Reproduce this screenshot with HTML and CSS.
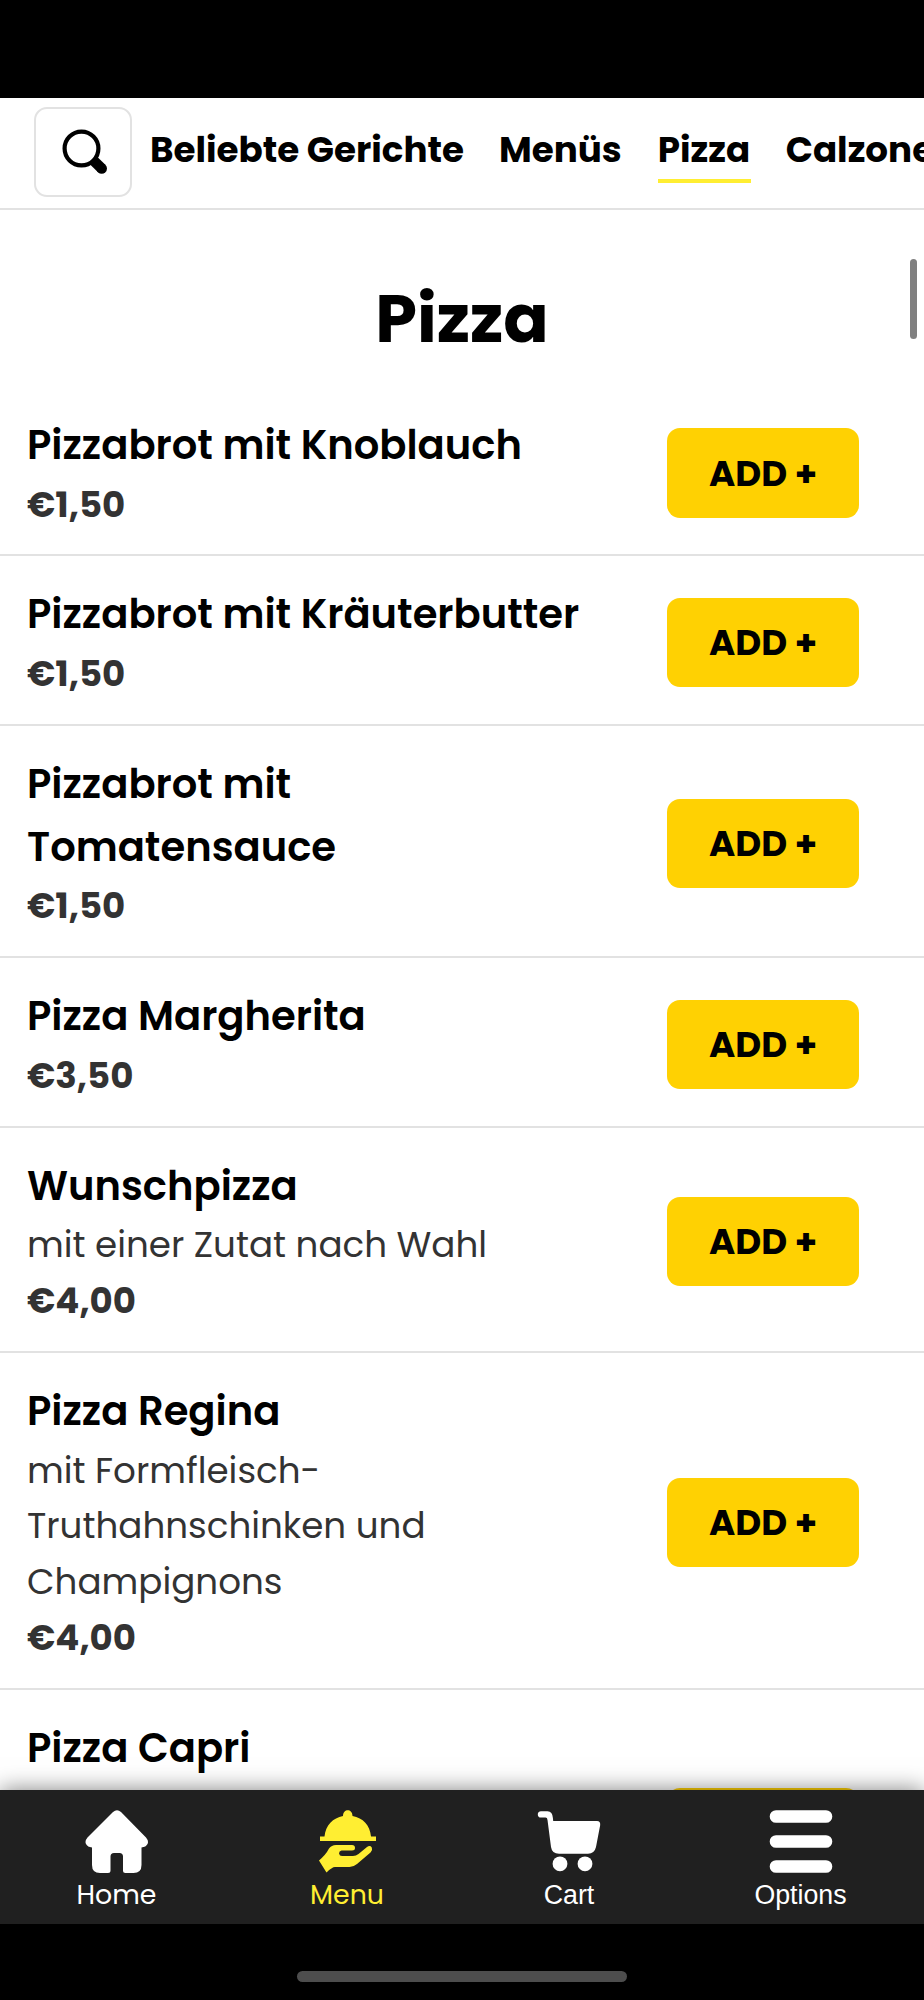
FILE: index.html
```html
<!DOCTYPE html>
<html lang="de">
<head>
<meta charset="utf-8">
<title>Pizza</title>
<link rel="stylesheet" href="styles.css">
</head>
<body>
<div class="screen">
  <div class="status"></div>
  <header class="tabs">
    <button class="search" aria-label="Suche">
      <svg width="46" height="46" viewBox="0 0 46 46"><circle cx="19.500" cy="19.500" r="16.900" fill="none" stroke="#000" stroke-width="4.200"/><path d="M31.500 31.500L39.700 39.500" stroke="#000" stroke-width="10.500"/><circle cx="39.700" cy="39.500" r="5.250"/></svg>
    </button>
    <nav class="tab-list">
      <a class="tab tab-popular">Beliebte Gerichte</a>
      <a class="tab tab-menus">Menüs</a>
      <a class="tab tab-active">Pizza</a>
      <a class="tab tab-calzone">Calzone</a>
    </nav>
  </header>
  <main class="content">
    <h1 class="heading">Pizza</h1>
    <section class="item"><div class="info"><h2 class="name">Pizzabrot mit Knoblauch</h2><p class="price">€1,50</p></div><button class="add">ADD +</button></section>
    <section class="item"><div class="info"><h2 class="name">Pizzabrot mit Kräuterbutter</h2><p class="price">€1,50</p></div><button class="add">ADD +</button></section>
    <section class="item"><div class="info"><h2 class="name">Pizzabrot mit<br>Tomatensauce</h2><p class="price">€1,50</p></div><button class="add">ADD +</button></section>
    <section class="item"><div class="info"><h2 class="name">Pizza Margherita</h2><p class="price">€3,50</p></div><button class="add">ADD +</button></section>
    <section class="item"><div class="info"><h2 class="name">Wunschpizza</h2><p class="desc">mit einer Zutat nach Wahl</p><p class="price">€4,00</p></div><button class="add">ADD +</button></section>
    <section class="item"><div class="info"><h2 class="name">Pizza Regina</h2><p class="desc">mit Formfleisch-<br>Truthahnschinken und<br>Champignons</p><p class="price">€4,00</p></div><button class="add">ADD +</button></section>
    <section class="item item-tall"><div class="info"><h2 class="name">Pizza Capri</h2></div><button class="add" aria-label="Add"></button></section>
    <div class="scrollbar"></div>
  </main>
  <footer class="dock">
    <a class="dock-item"><svg class="icon" width="64" height="64" viewBox="0 0 64 64"><path fill="#fff" d="M28 2Q32-1.500 36 2L61 27.500Q64 31 62.500 34Q61 37 56.500 37.500V55Q56.500 63 48.500 63H40.500Q38 63 38 60.500V46.500Q38 43 34.500 43H29Q25.500 43 25.500 46.500V60.500Q25.500 63 23 63H15Q7 63 7 55V37.500Q2.500 37 1 34Q-.5 31 2.500 27.500Z"/></svg><span class="label">Home</span></a>
    <a class="dock-item dock-active"><svg class="icon icon-menu" width="64" height="64" viewBox="0 0 64 64"><g fill="#ffee32"><path d="M4 26.500H8.500C9.500 15 17 8 27 6C27-1.800 36.500-1.800 36.500 6C47 8 54 15 55 26.500H60V31H4Z"/><path d="M3 50.500Q10 44.500 13 38.500Q15.500 35 20 35H36Q39 35 39 38Q39 40.500 36 40.500H25.500Q23 41 23 43.500Q23.500 46 26 46H37Q40 46 42.500 44L51 37Q54 35 55.800 37.500Q57 40 54.500 42.500L41 54Q37.500 57 33.500 57H19Q16 57 10.500 62.500Z"/></g></svg><span class="label">Menu</span></a>
    <a class="dock-item"><svg class="icon" width="64" height="64" viewBox="0 0 64 64"><g fill="#fff"><path d="M4 1.200H10.500Q15.500 1.500 15.900 8L16.200 11H60Q63.500 11 63.200 15L59 37Q57.500 43.500 51 43.800H22Q15 43.800 14 37L10.500 10Q10.300 7.600 8.500 7.600H4Q.8 7.400 .8 4.400Q.8 1.400 4 1.200Z"/><circle cx="23" cy="53.800" r="7.400"/><circle cx="48" cy="53.800" r="7.400"/></g></svg><span class="label label-system">Cart</span></a>
    <a class="dock-item"><svg class="icon" width="64" height="64" viewBox="0 0 64 64"><path stroke="#fff" stroke-width="12.600" stroke-linecap="round" d="M7 6.500H57M7 31.500H57M7 56.500H57"/></svg><span class="label label-system">Options</span></a>
  </footer>
  <div class="gesture"><div class="gesture-bar"></div></div>
</div>
</body>
</html>
```
FILE: styles.css
```css
* { box-sizing: border-box; }
body { margin: 0; background: #fff; }
.screen {
  width: 924px; height: 2000px; overflow: hidden;
  display: flex; flex-direction: column;
  font-family: Poppins, Inter, "Open Sans", sans-serif;
  color: #000; white-space: nowrap;
}
h1, h2, p { margin: 0; }
button { border: 0; padding: 0; font: inherit; color: inherit; }
.status { height: 98px; background: #000; flex: none; }
.tabs {
  height: 112px; flex: none; display: flex; align-items: flex-start;
  padding: 9px 0 0 34px; border-bottom: 2px solid #e2e2e2; background: #fff; overflow: hidden;
}
.search {
  width: 98px; height: 90px; flex: none; padding: 0 0 0 26px;
  border: 2px solid #e2e2e2; border-radius: 13px; background: #fff; text-align: left;
}
.search svg { display: block; }
.tab-list { display: flex; padding-left: 18px; }
.tab { flex: none; height: 76px; padding-top: 18px; font-size: 35.7px; line-height: 50px; font-weight: 700; }
.tab-popular { width: 349px; }
.tab-menus { width: 158.700px; }
.tab-active { width: 93px; border-bottom: 4px solid #ffee32; }
.tab-calzone { margin-left: 35px; }
.content { position: relative; height: 1580px; flex: none; overflow: hidden; background: #fff; }
.heading { height: 177px; padding-top: 69px; text-align: center; font-size: 66.960px; line-height: 80px; font-weight: 700; }
.item {
  display: flex; justify-content: space-between; align-items: center;
  padding: 26.900px 65px 22.100px 27px; border-bottom: 2px solid #e2e2e2;
}
.item-tall { height: 282px; align-items: flex-start; }
.item-tall .add { margin-top: 71px; }
.name { font-size: 40.100px; line-height: 62.700px; font-weight: 600; }
.desc { font-size: 35.700px; line-height: 55.800px; color: #333; }
.price { font-size: 35.600px; line-height: 55.800px; font-weight: 700; color: #333; }
.add {
  width: 192px; height: 89.300px; flex: none;
  border-radius: 13px; background: #ffd102; font-size: 35.700px; font-weight: 700;
}
.scrollbar { position: absolute; left: 910px; top: 49px; width: 7px; height: 80px; border-radius: 4px; background: #808080; }
.dock {
  position: relative; height: 134px; flex: none; display: grid;
  grid-template-columns: 233px 228px 216px 247px;
  background: #202020; color: #fff; box-shadow: 0 0 22px rgba(0, 0, 0, .5);
}
.dock-item { display: flex; flex-direction: column; align-items: center; padding-top: 20px; }
.icon { display: block; flex: none; }
.icon-menu { margin-left: 2px; }
.label { margin-top: 4px; font-size: 26.780px; line-height: 34px; }
.dock-active { color: #ffee32; }
.label-system { font-family: "Liberation Sans", Arial, sans-serif; }
.gesture { height: 76px; flex: none; background: #000; padding-top: 47px; position: relative; }
.gesture-bar { width: 330px; height: 11px; border-radius: 6px; background: #4d4d4d; margin: 0 auto; }
```
